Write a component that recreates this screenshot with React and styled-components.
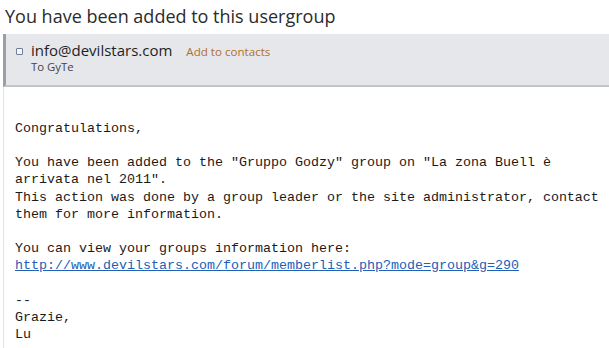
import React from "react";
import styled, { createGlobalStyle } from "styled-components";

const Global = createGlobalStyle`
  html, body { margin: 0; padding: 0; background: #fff; }
  body { width: 609px; height: 348px; overflow: hidden; }
`;

const Page = styled.div`
  display: flex;
  flex-direction: column;
  font-family: "Open Sans", "Noto Sans", sans-serif;
`;

const Title = styled.h1`
  margin: 0;
  padding: 2px 0 0 5px;
  height: 32px;
  box-sizing: border-box;
  font-size: 18px;
  font-weight: 400;
  line-height: 28px;
  color: #2b2b2b;
`;

const Header = styled.div`
  margin: 2px 0 0 3px;
  background: #e6e7ea;
  border-left: 3px solid #9a9ea6;
  border-bottom: 2px solid #c4c5c8;
  display: flex;
  flex-direction: column;
  padding: 5px 0 0 9px;
  box-sizing: border-box;
  height: 53px;
`;

const FromRow = styled.div`
  display: flex;
  align-items: center;
  height: 22px;
`;

const Check = styled.span`
  width: 5px;
  height: 5px;
  border: 1px solid #6d7f99;
  border-radius: 1px;
  background: #f4f6fa;
  margin: 2px 8px 0 1px;
`;

const Email = styled.span`
  font-size: 15px;
  color: #1f1f1f;
`;

const AddLink = styled.span`
  font-size: 11.6px;
  color: #b0702a;
  margin-left: 14px;
  margin-top: 2px;
`;

const ToLine = styled.div`
  font-size: 11.4px;
  color: #444;
  padding-left: 16px;
  line-height: 12px;
`;

const Body = styled.div`
  margin-left: 3px;
  border-left: 1px solid #e4e4e4;
  padding: 33px 0 0 11px;
  height: 261px;
  box-sizing: border-box;
  font-family: "Liberation Mono", "Courier New", monospace;
  font-size: 13.33px;
  line-height: 17.15px;
  color: #1a1a1a;
  white-space: pre;
`;

const Link = styled.a`
  color: #2060b8;
  text-decoration: underline;
`;

export default function App() {
  return (
    <>
      <Global />
      <Page>
        <Title>You have been added to this usergroup</Title>
        <Header>
          <FromRow>
            <Check />
            <Email>info@devilstars.com</Email>
            <AddLink>Add to contacts</AddLink>
          </FromRow>
          <ToLine>To GyTe</ToLine>
        </Header>
        <Body>
{`Congratulations,

You have been added to the "Gruppo Godzy" group on "La zona Buell è
arrivata nel 2011".
This action was done by a group leader or the site administrator, contact
them for more information.

You can view your groups information here:
`}<Link href="#">http://www.devilstars.com/forum/memberlist.php?mode=group&amp;g=290</Link>{`

--
Grazie,
Lu`}
        </Body>
      </Page>
    </>
  );
}
